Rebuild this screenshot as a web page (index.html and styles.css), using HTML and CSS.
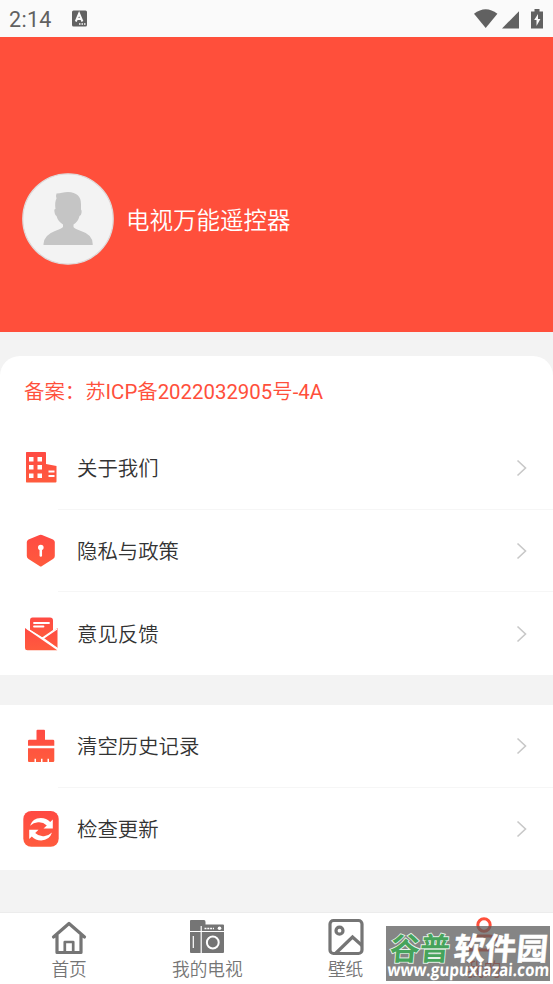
FILE: index.html
```
<!DOCTYPE html>
<html lang="zh-CN">
<head>
<meta charset="utf-8">
<title>电视万能遥控器</title>
<link rel="stylesheet" href="styles.css">
</head>
<body>
<svg width="0" height="0" class="defs"><defs><linearGradient id="g" x1="0" y1="0" x2="0" y2="1"><stop offset="0" stop-color="#ff4a43"/><stop offset="1" stop-color="#ff5b3d"/></linearGradient></defs></svg>
<div class="status">
  <span class="time">2:14</span>
  <svg class="ime" width="15" height="17" viewBox="0 0 15 17"><rect y=".5" width="15" height="16" rx="1.5" fill="#616161"/><path d="M3.800 11.500 7.100 3.500 10.400 11.500M5 9H9.300" fill="none" stroke="#fafafa" stroke-width="2"/><path d="M7 14h1.500m1 0H11m1 0h1.500" stroke="#fafafa" stroke-width="1.300"/></svg>
  <svg class="signals" width="72" height="24" viewBox="0 0 72 24"><g fill="#616161"><path d="M0 7.800Q11.700-1.500 23.400 7.800L11.700 22Z"/><path d="M28 22.500H45V5.200Z"/><path d="M57 5.500h3.500V3h5v2.500H69V22.500H57Z"/></g><path d="M64 8 60.200 14H62.500V20L66.400 13H64Z" fill="#fafafa"/></svg>
</div>
<header class="hero">
  <svg class="avatar" width="92" height="92" viewBox="0 0 92 92"><circle cx="46" cy="46" r="45.200" fill="#f3f3f3" stroke="#dedada" stroke-width="1.300"/><path d="M34.500 20.500Q38 20.500 40 19.800Q43 19 46 19Q59 19.500 59 31V36.500Q60 37 59.500 40Q59 43 57.500 43Q56 49 51.500 51.500V54Q52 55.500 59 58Q70.500 61.500 70.700 71V72H21.500V71Q22 62 33 58Q40 55.500 41 54V51.500Q36 48.500 34.500 43Q32.500 42 32.300 37Q32.500 36 33.500 36Q32.500 29 34.500 25.500Q33.500 23 34.500 20.500Z" fill="#c5c5c5"/></svg>
  <h1>电视万能遥控器</h1>
</header>
<main>
  <section class="card rounded">
    <p class="record">备案：苏<span>ICP</span>备<span>2022032905</span>号<span>-4A</span></p>
    <div class="row"><svg class="icon" viewBox="0 0 36 36"><path d="M3.500 2H22.300Q23 2 23 3V14L33.500 16V31.500Q33.500 32.500 32.500 32.500H3.500Q3 32.500 3 31.500V3Q3 2 3.500 2Z" fill="url(#g)"/><path d="M6 7h4.500v4.500H6zM14.500 7H19v4.500h-4.500zM6 15h4.500v4.500H6zM14.500 15H19v4.500h-4.500zM6 23.500h4.500V28H6zM14.500 23.500H19V28h-4.500z" fill="#fff"/><path d="M25.500 21.500h6M25.500 26h6" stroke="#fff" stroke-width="2"/></svg><span class="label">关于我们</span><svg class="arrow" viewBox="0 0 12 18"><path d="m1.500 1.500 8 7.500-8 7.500"/></svg></div>
    <div class="row"><svg class="icon" viewBox="0 0 36 36"><path d="M16.500 2Q17.700 1.500 19 2L30 6.500Q31.800 7.500 31.800 9V23Q31.800 25 30 26L19 33Q17.700 34 16.500 33L5.500 26Q3.800 25 3.800 23V9Q3.800 7.500 5.500 6.500Z" fill="url(#g)"/><circle cx="17.800" cy="14.500" r="2.800" fill="#fff"/><path d="M17.800 15v7.500" stroke="#fff" stroke-width="2.500" stroke-linecap="round"/></svg><span class="label">隐私与政策</span><svg class="arrow" viewBox="0 0 12 18"><path d="m1.500 1.500 8 7.500-8 7.500"/></svg></div>
    <div class="row"><svg class="icon" viewBox="0 0 36 36"><g fill="url(#g)"><path d="M9.500 1.500H27Q30 1.500 30 4.500V14L19 21.500 7 14V4.500Q7 1.500 9.500 1.500Z"/><path d="M2 12 34.300 34.200H4.500Q2 34.200 2 31.700Z"/><path d="M34.500 12V32.200L20.500 22.500Z"/></g><path d="m4 12.500 16 10L34 13M19 21.500l15.500 11" stroke="#fff" stroke-width="1.300" fill="none"/><path d="M11 7h15M11 10.500h9.500" stroke="#fff" stroke-width="1.800" stroke-linecap="round"/></svg><span class="label">意见反馈</span><svg class="arrow" viewBox="0 0 12 18"><path d="m1.500 1.500 8 7.500-8 7.500"/></svg></div>
  </section>
  <section class="card second">
    <div class="row"><svg class="icon" viewBox="0 0 36 36"><g transform="translate(0 .8)"><path d="M14.500 1H21Q22 1 22 2V11H30Q31.300 11 31.300 12.300V17H5V12.300Q5 11 6.300 11H13.500V2Q13.500 1 14.500 1ZM5 19.500H31.300V32Q31.300 33.200 30 33.200H26V30H24.500V33.200H19.500V30H18V33.200H13V30H11.500V33.200H6Q5 33.200 5 32Z" fill="url(#g)"/></g></svg><span class="label">清空历史记录</span><svg class="arrow" viewBox="0 0 12 18"><path d="m1.500 1.500 8 7.500-8 7.500"/></svg></div>
    <div class="row"><svg class="icon" viewBox="0 0 36 36"><rect x=".3" y="0" width="35.400" height="35.800" rx="8" fill="url(#g)"/><g fill="#fff"><path d="M7 14.800Q9.500 7 17.800 7Q23.500 7 27.200 11L29.800 8.500V17.600H20.500L23.800 14.400Q20 10.700 15 11.200Q10.500 11.500 7 14.800Z"/><path d="M7 14.800Q9.500 7 17.800 7Q23.500 7 27.200 11L29.800 8.500V17.600H20.500L23.800 14.400Q20 10.700 15 11.200Q10.500 11.500 7 14.800Z" transform="rotate(180 18 18.200)"/></g></svg><span class="label">检查更新</span><svg class="arrow" viewBox="0 0 12 18"><path d="m1.500 1.500 8 7.500-8 7.500"/></svg></div>
  </section>
</main>
<nav>
  <div class="tab"><svg width="36" height="36" viewBox="0 0 36 36"><g fill="none" stroke="#757575" stroke-width="3.200" stroke-linejoin="round"><path d="M2.500 18 18 4.500 33.500 18M6 16V33.500H30V16" stroke-linecap="round"/><path d="M13.800 33V23H22.200V33" stroke-width="2.700"/></g></svg><span>首页</span></div>
  <div class="tab"><svg width="36" height="36" viewBox="0 0 36 36"><path d="M2 1H15Q16.500 1 16.500 3V5.500H34Q35 5.500 35 6.500V33Q35 34 34 34H2Q1 34 1 33V2Q1 1 2 1Z" fill="#757575"/><path d="M0 12.500H35M12.200 7V34M4.300 17V29" stroke="#fff" stroke-width="1.200"/><path d="M15.500 9.500H25" stroke="#fff" stroke-width="1.500" stroke-dasharray="2 .8"/><circle cx="30.500" cy="9.300" r="1.800" fill="#fff"/><circle cx="23.800" cy="23.500" r="5.900" fill="#757575" stroke="#fff" stroke-width="2"/></svg><span>我的电视</span></div>
  <div class="tab"><svg width="36" height="36" viewBox="0 0 36 36"><g fill="none" stroke="#757575" stroke-width="3.200"><rect x="2" y="1.500" width="32" height="33" rx="3.500"/><circle cx="11.500" cy="11.700" r="3.500"/><path d="m7.500 34.500 17-16.500 9.500 8.500"/></g></svg><span>壁纸</span></div>
  <div class="tab active"><svg width="36" height="36" viewBox="0 0 36 36"><g fill="none" stroke="#ff4f3b" stroke-width="3"><circle cx="18" cy="6" r="6.200"/><path d="M4 31v-5q0-9 9-9h10q9 0 9 9v5Z"/></g></svg><span>我的</span></div>
</nav>
<svg class="watermark" width="164" height="55" viewBox="0 0 164 55"><rect width="164" height="55" fill="#5c5c5c" fill-opacity=".75"/><g transform="translate(3 34) skewX(-5)"><text class="brand green" x="0" y="0" textLength="60" lengthAdjust="spacingAndGlyphs">谷普</text><text class="brand" x="64" y="0" textLength="94" lengthAdjust="spacingAndGlyphs">软件园</text></g><g transform="translate(1 50) skewX(-4)"><text class="site" textLength="162" lengthAdjust="spacingAndGlyphs">www.gupuxiazai.com</text></g></svg>
</body>
</html>
```
FILE: styles.css
```
* { box-sizing: border-box; }
body {
  margin: 0;
  width: 553px;
  height: 984px;
  display: flex;
  flex-direction: column;
  position: relative;
  overflow: hidden;
  background: #f3f3f3;
  color: #333;
  font-family: Roboto, "Noto Sans CJK SC", sans-serif;
  font-weight: 350;
}
svg { display: block; flex: none; }
.defs { position: absolute; }
.status {
  height: 37px;
  flex: none;
  display: flex;
  align-items: center;
  background: #fafafa;
  padding: 0 6px 0 9px;
}
.time { font-size: 21.5px; font-weight: 400; width: 63px; color: #616161; letter-spacing: .3px; padding-top: 2px; }
.signals { margin-left: auto; margin-right: 1px; margin-top: -2px; }
.hero {
  height: 295px;
  flex: none;
  background: #ff4f3b;
  display: flex;
  align-items: center;
  gap: 12px;
  padding: 68px 0 0 22px;
}
h1 { color: #fff; font-size: 23.5px; line-height: 36px; font-weight: 350; margin: 0; padding-top: 4px; }
main { padding-top: 24px; flex: none; height: 580px; }
.card { background: #fff; }
.rounded { border-radius: 20px 20px 0 0; height: 319px; }
.record { margin: 0; height: 71px; line-height: 73px; padding-left: 24px; color: #ff4f3b; font-size: 20.4px; }
.record span { font-weight: 400; }
.second { margin-top: 30px; height: 165px; }
.row {
  height: 82.67px;
  display: flex;
  align-items: center;
  padding: 0 25px 0 23px;
  background: linear-gradient(#f6f6f6, #f6f6f6) 58px 100% / 495px 1px no-repeat;
}
.second .row { height: 82.5px; }
.row:last-child { background: none; }
.icon { width: 36px; height: 36px; }
.label { flex: 1; margin-left: 18px; padding-top: 2px; font-size: 20.4px; line-height: 30px; }
.arrow { width: 12px; height: 18px; fill: none; stroke: #c8c8c8; stroke-width: 1.6; }
nav {
  height: 72px;
  flex: none;
  display: grid;
  grid-template-columns: repeat(4, 1fr);
  background: #fff;
  border-top: 1px solid #ececec;
}
.tab { display: flex; flex-direction: column; align-items: center; padding-top: 6px; color: #757575; font-size: 17.7px; line-height: 26px; }
.tab svg { margin-bottom: 2px; overflow: visible; }
.active { color: #ff4f3b; }
.watermark { position: absolute; left: 386px; top: 926px; overflow: visible; }
.brand { font: 700 31px "Noto Sans CJK SC", sans-serif; fill: #fff; stroke: #fff; stroke-width: .5px; }
.green { fill: #46a35b; stroke: #e5f2e8; stroke-width: 1.8px; paint-order: stroke; }
.site { font: 700 17.5px "Open Sans", sans-serif; fill: #fff; }
```
